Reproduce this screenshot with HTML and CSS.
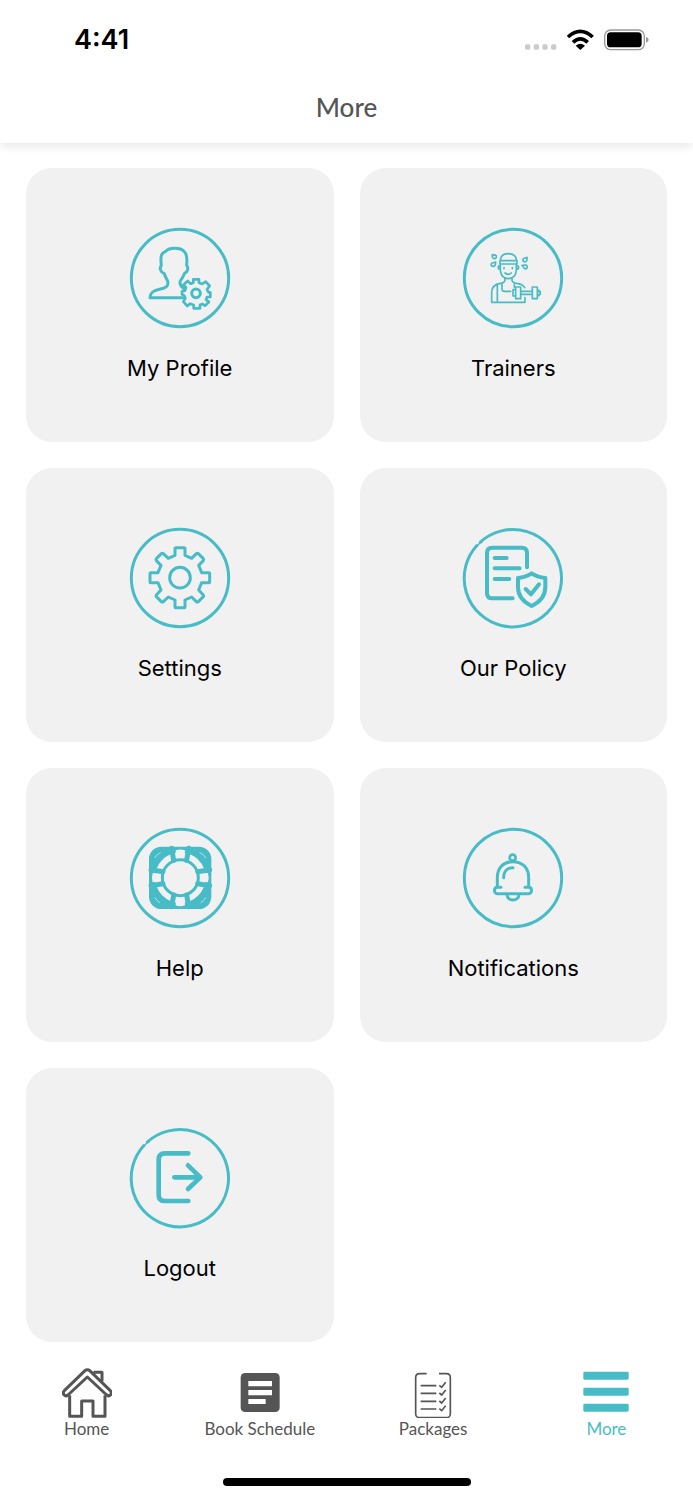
FILE: index.html
```html
<!DOCTYPE html>
<html lang="en">
<head>
<meta charset="utf-8">
<meta name="viewport" content="width=device-width, initial-scale=1">
<title>More</title>
<link rel="stylesheet" href="styles.css">
</head>
<body>
<header class="top">
  <div class="status">
    <span class="time">4:41</span>
    <svg class="status-icons" viewBox="45 41 375 66" aria-hidden="true">
      <g fill="#cbcbcb"><rect x="45" y="87" width="16" height="16" rx="5"/><rect x="71" y="87" width="16" height="16" rx="5"/><rect x="97" y="87" width="16" height="16" rx="5"/><rect x="123" y="87" width="16" height="16" rx="5"/></g>
      <g fill="none" stroke="#000" stroke-width="11"><path d="M174 65Q211 31 248 65"/><path d="M189 81Q211 60 233 81"/></g>
      <path d="M197 91Q211 79 225 91L211 104Z"/>
      <rect x="284" y="44" width="119" height="59" rx="18" fill="none" stroke="#999" stroke-width="4"/>
      <rect x="291" y="51" width="104" height="45" rx="11"/>
      <path d="M408 64Q416 67 416 73Q416 79 408 82Z" fill="#999"/>
    </svg>
  </div>
  <h1 class="title">More</h1>
</header>

<main class="grid">
  <a class="tile" href="#profile">
    <svg class="icon" viewBox="30 26 300 300" aria-hidden="true">
      <circle cx="180" cy="176" r="146" stroke-width="9"/>
      <path stroke-width="9" d="M188 235H90C90 219 101 213 121 209C138 206 144 201 144 190C144 182 136 176 133 163C121 158 118 148 124 138C121 112 123 101 137 96C148 84 181 84 192 96C201 103 202 117 200 137C206 148 204 157 193 163C189 178 179 181 180 191C181 199 185 203 192 207"/>
      <path stroke-width="8" d="M220 180H237V190L247 194L257 187L269 200L261 210L265 219H271V233H261L258 241L267 248L255 259L247 254L240 257V267H221V257L210 253L202 260L190 247L196 237L193 229L186 225V216L195 214L198 204L190 197L203 185L212 193L220 190Z"/>
      <circle cx="228" cy="222" r="13" stroke-width="9"/>
    </svg>
    <span class="label">My Profile</span>
  </a>
  <a class="tile" href="#trainers">
    <svg class="icon" viewBox="30 26 300 300" aria-hidden="true">
      <circle cx="180" cy="176" r="146" stroke-width="9"/>
      <g stroke-width="5">
        <path d="M142 123C143 111 152 103 166 103S189 111 191 123M141 124H192V134H141ZM142 135V154C144 169 153 178 166 178S188 169 190 154V135M141 139C134 138 134 150 142 150M191 139C199 138 199 150 190 150"/>
        <path d="M156 161Q166 169 175 161M156 176V183C155 188 150 191 142 192C124 194 116 203 116 221V249H216V235M177 176V183C178 188 183 191 191 192C203 193 211 197 215 205M133 195V249M147 192V210Q147 216 154 216H173M184 191V204"/>
        <path d="M153 145V148M178 145V148"/>
        <path d="M118 106L129 108C134 119 119 122 118 112ZM128 128L116 132C110 141 124 145 127 136ZM222 114L211 118C205 128 221 131 222 122ZM207 138L219 137C229 143 218 153 213 146Z"/>
        <path d="M188 203H203V238H188ZM238 203H253V238H238ZM203 216H238V225H203M188 211H180V230H188M253 213H258V217H262V225H258V229H253"/>
      </g>
    </svg>
    <span class="label">Trainers</span>
  </a>
  <a class="tile" href="#settings">
    <svg class="icon" viewBox="30 26 300 300" aria-hidden="true">
      <circle cx="180" cy="176" r="146" stroke-width="9"/>
      <path stroke-width="9" d="M168 85H192Q195 85 195 88V108L215 117L229 103Q232 101 235 103L250 118Q252 121 250 124L236 138L245 160H266Q269 160 269 163V187Q269 190 266 190H245L236 212L250 227Q252 230 250 232L235 247Q232 249 229 247L215 233L195 242V262Q195 265 192 265H168Q165 265 165 262V242L145 233L130 247Q127 249 124 247L109 232Q107 230 109 227L123 212L114 190H93Q90 190 90 187V163Q90 160 93 160H114L123 138L109 124Q107 121 109 118L124 103Q127 101 130 103L145 117L165 108V88Q165 85 168 85Z"/>
      <circle cx="180" cy="175" r="31" stroke-width="9"/>
    </svg>
    <span class="label">Settings</span>
  </a>
  <a class="tile" href="#policy">
    <svg class="icon" viewBox="30 26 300 300" aria-hidden="true">
      <path stroke-width="9" d="M82 68A146 146 0 1 1 71 79"/>
      <path stroke-width="5" d="M72 81Q77 72 87 68"/>
      <g stroke-width="12"><path d="M222 144V101Q222 85 206 85H118Q102 85 102 101V221Q102 237 118 237H179M125 116H161M125 147H200M125 179H169M236 162C224 170 210 174 195 176V204C195 231 211 248 236 260C261 248 277 231 277 204V176C262 174 248 170 236 162Z"/><path d="M218 209L234 225L258 195"/></g>
    </svg>
    <span class="label">Our Policy</span>
  </a>
  <a class="tile" href="#help">
    <svg class="icon" viewBox="30 26 300 300" aria-hidden="true">
      <circle cx="180" cy="176" r="146" stroke-width="9"/>
      <rect class="solid" x="87" y="82" width="187" height="187" rx="37"/>
      <circle class="hole" cx="181" cy="175" r="76"/>
      <path class="hole" d="M167 93Q181 88 195 93L192 124H170ZM167 258Q181 264 195 258L192 226H170ZM98 161Q94 175 98 189L128 186V164ZM264 161Q268 175 264 189L232 186V164Z"/>
      <circle class="hub" cx="181" cy="175" r="54" stroke-width="9"/>
      <path stroke-width="15" d="M155 87L161 123M206 87L200 123M155 262L161 227M206 262L200 227M93 151L129 157M93 199L129 193M269 151L233 157M269 199L233 193"/>
      <path class="sliver" d="M105 115Q110 105 121 100M240 100Q252 105 257 115M105 235Q110 245 119 250M243 250Q252 245 257 235"/>
    </svg>
    <span class="label">Help</span>
  </a>
  <a class="tile" href="#notifications">
    <svg class="icon" viewBox="60 26 300 300" aria-hidden="true">
      <circle cx="210" cy="176" r="146" stroke-width="9"/>
      <path stroke-width="9" d="M174 204H163V175C163 145 182 127 210 127S257 145 257 175V204H246M163 204C152 204 151 223 163 223H257C269 223 268 204 257 204M192 225C193 248 227 248 228 225M182 175C182 156 193 145 210 145"/>
      <circle cx="209" cy="115" r="9" stroke-width="8"/>
    </svg>
    <span class="label">Notifications</span>
  </a>
  <a class="tile" href="#logout">
    <svg class="icon" viewBox="30 26 300 300" aria-hidden="true">
      <path stroke-width="9" d="M82 68A146 146 0 1 1 71 79"/>
      <path stroke-width="5" d="M72 81Q77 72 87 68"/>
      <path stroke-width="14" d="M205 102H135Q116 102 116 121V226Q116 245 135 245H205M163 174H238M204 138L241 174L204 209"/>
    </svg>
    <span class="label">Logout</span>
  </a>
</main>

<nav class="tabs">
  <a class="tab" href="#home">
    <svg class="tab-icon" viewBox="65 55 150 150" aria-hidden="true">
      <g fill="none" stroke="#555" stroke-width="9" stroke-linejoin="round"><path d="M88 137V200H124V154H158V200H194V137"/><path d="M163 72V68H185V95"/><path d="M141 60Q137 60 134 63L72 123C64 132 74 143 83 136L141 82L199 136C208 143 218 132 210 123L148 63Q145 60 141 60Z"/></g>
      <path d="M77 130L141 70L205 130" fill="none" stroke="#fff" stroke-width="4"/>
    </svg>
    Home
  </a>
  <a class="tab" href="#book">
    <svg class="tab-icon" viewBox="585 55 150 150" aria-hidden="true">
      <rect x="602" y="70" width="117" height="117" rx="13" fill="#555"/>
      <path d="M625 94H696V110H625ZM625 121H696V137H625ZM625 148H677V163H625Z" fill="#fff"/>
    </svg>
    Book Schedule
  </a>
  <a class="tab" href="#packages">
    <svg class="tab-icon" viewBox="115 55 150 150" aria-hidden="true">
      <g fill="none" stroke="#555" stroke-width="5"><path d="M171 72H150Q138 72 138 84V192Q138 204 150 204H230Q242 204 242 192V84Q242 72 230 72H208M153 108H200M153 131H200M153 155H200M153 178H200"/><path d="M209 107L216 113L228 98M209 130L216 136L228 121M209 154L216 160L228 145M209 177L216 183L228 168"/></g>
    </svg>
    Packages
  </a>
  <a class="tab active" href="#more" aria-current="page">
    <svg class="tab-icon" viewBox="634 55 150 150" aria-hidden="true">
      <g fill="#48bcc6"><rect x="641" y="66" width="136" height="24" rx="4"/><rect x="641" y="114" width="136" height="24" rx="4"/><rect x="641" y="162" width="136" height="24" rx="4"/></g>
    </svg>
    More
  </a>
</nav>
<div class="home-bar"></div>
</body>
</html>
```
FILE: styles.css
```css
* { box-sizing: border-box; }

body {
  margin: 0;
  background: #fff;
  color: #000;
  font-family: Inter, "Liberation Sans", sans-serif;
}

a { color: inherit; text-decoration: none; }

.top {
  padding-bottom: 20px;
  box-shadow: 0 3px 10px rgba(0, 0, 0, 0.1);
}

.status {
  display: flex;
  align-items: center;
  justify-content: space-between;
  height: 79px;
  padding: 0 43px 0 74px;
}

.time { font-size: 27px; font-weight: 600; line-height: 32px; }

.status-icons { width: 125px; height: 22px; }

.title {
  margin: 0;
  padding-top: 12px;
  color: #555;
  font-family: Lato, sans-serif;
  font-size: 26px;
  font-weight: 500;
  line-height: 32px;
  text-align: center;
}

.grid {
  display: grid;
  grid-template-columns: 1fr 1fr;
  gap: 26px;
  padding: 25px 26px 26px;
}

.tile {
  display: flex;
  flex-direction: column;
  align-items: center;
  gap: 26px;
  padding: 60px 10px;
  border-radius: 26px;
  background: #f1f1f1;
}

.icon {
  width: 100px;
  height: 100px;
  overflow: visible;
  fill: none;
  stroke: #48bcc6;
  stroke-linecap: round;
  stroke-linejoin: round;
}

.icon .solid { fill: #48bcc6; stroke: none; }
.icon .hole { fill: #f1f1f1; stroke: none; }
.icon .hub { fill: #f1f1f1; }
.icon .sliver { stroke: #b5e0e3; stroke-width: 3; }

.label { font-size: 22px; line-height: 28px; }

.tabs {
  display: grid;
  grid-template-columns: repeat(4, 1fr);
}

.tab {
  display: flex;
  flex-direction: column;
  align-items: center;
  color: #555;
  font-family: Lato, sans-serif;
  font-size: 17px;
  line-height: 22px;
}

.tab.active { color: #48bcc6; }

.tab-icon { width: 50px; height: 50px; }

.home-bar {
  width: 248px;
  height: 8px;
  margin: 38px auto 14px;
  border-radius: 4px;
  background: #000;
}
```
